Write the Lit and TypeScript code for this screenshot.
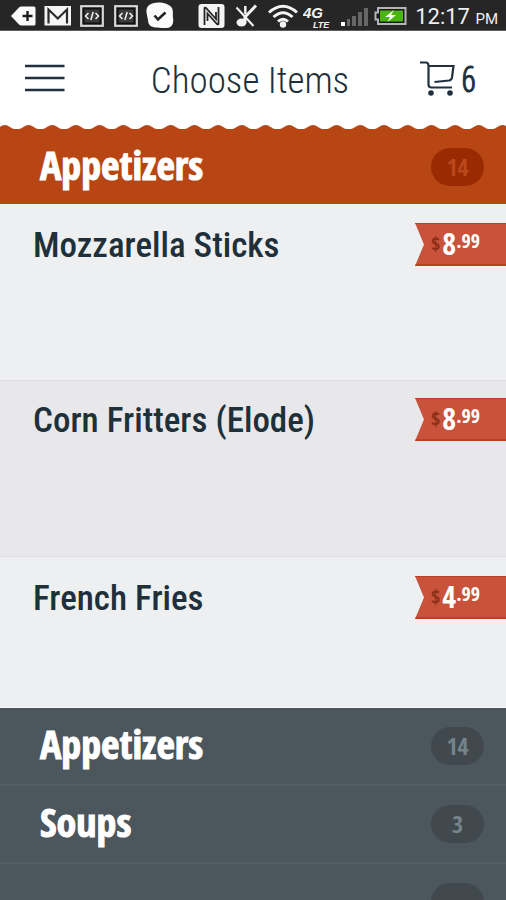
import { LitElement, html, css } from "lit";
import { customElement, property } from "lit/decorators.js";

interface Dish {
  name: string;
  dollars: string;
  cents: string;
  tone: string;
}

const dishes: Dish[] = [
  { name: "Mozzarella Sticks", dollars: "8", cents: ".99", tone: "first" },
  { name: "Corn Fritters (Elode)", dollars: "8", cents: ".99", tone: "alt" },
  { name: "French Fries", dollars: "4", cents: ".99", tone: "last" },
];

const codeIcon = (width: number) => html`
  <svg width=${width} height="30" viewBox="0 0 ${width} 30" aria-hidden="true">
    <rect x="1.2" y="6.2" width="21.6" height="19.6" fill="#111" stroke="#d8d8d8" stroke-width="2.2" />
    <rect x="4.5" y="9.5" width="15" height="13" fill="#3a3a3a" />
    <path d="M8.5 13 5.5 16l3 3M15.500 13l3 3-3 3M13.200 12l-2.400 8" fill="none" stroke="#f2f2f2" stroke-width="1.500" />
  </svg>`;

@customElement("status-bar")
export class StatusBar extends LitElement {
  static styles = css`
    :host {
      display: flex;
      align-items: center;
      justify-content: space-between;
      height: 30px;
      padding: 0 8px 0 10px;
      background: #262626;
      border-bottom: 1px solid #5c5c5c;
      box-sizing: content-box;
      color: #f0f0f0;
      font-family: Roboto, "Open Sans", sans-serif;
    }
    svg {
      display: block;
      flex: none;
    }
    .notices {
      display: flex;
      gap: 8px;
    }
    .system {
      display: flex;
      gap: 4px;
    }
    .clock {
      font-size: 22px;
      line-height: 34px;
      height: 30px;
      white-space: nowrap;
    }
    .half {
      font-size: 15px;
    }
    .net {
      font: italic bold 15px "Liberation Sans", sans-serif;
    }
    .lte {
      font: italic bold 9px "Liberation Sans", sans-serif;
    }
  `;

  render() {
    return html`
      <div class="notices">
        <svg width="26" height="30" viewBox="0 0 26 30" aria-hidden="true">
          <path d="M1 16 9 7.500Q10 6.500 11.500 6.500H24Q25.500 6.500 25.500 8V24Q25.500 25.500 24 25.500H11.500Q10 25.500 9 24.500Z" fill="#fafafa" />
          <path d="M17.500 11v10M12.500 16h10" stroke="#1d1d1d" stroke-width="2.400" />
        </svg>
        <svg width="28" height="30" viewBox="0 0 28 30" aria-hidden="true">
          <rect x=".5" y="6" width="26.500" height="19.500" fill="#f5f5f5" />
          <path d="M4.500 23.500V9.500L13.800 18.500 23 9.500V23.500" fill="none" stroke="#2b2b2b" stroke-width="2.200" />
        </svg>
        ${codeIcon(26)} ${codeIcon(24)}
        <svg width="29" height="30" viewBox="0 0 29 30" aria-hidden="true">
          <path d="M8 3C13 1.500 23 3 26 8 27.500 12 26.500 14 27 18 28 23 26 27.500 21 28 17 28 14 28 11 27.500 5 27.500 2 25 2 20 1.500 17 .8 15 .5 12 0 7 3 4 8 3Z" fill="#fafafa" />
          <path d="M8.500 15.500 12 19.500 19.500 12.500" fill="none" stroke="#222" stroke-width="2.600" />
        </svg>
      </div>
      <div class="system">
        <svg width="32" height="30" viewBox="0 0 32 30" aria-hidden="true">
          <rect x=".5" y="4" width="26" height="24" rx="3" fill="#f4f4f4" />
          <path d="M6.500 25V8.500Q6.500 7 8 8L18 19V12M20.500 7V23.500Q20.500 25 19 24L9.500 13.500V21" fill="none" stroke="#262626" stroke-width="1.800" />
        </svg>
        <svg width="29" height="30" viewBox="0 0 29 30" aria-hidden="true">
          <ellipse cx="7.500" cy="22.500" rx="5" ry="4" fill="#f4f4f4" />
          <path d="M11.300 14V6" fill="none" stroke="#f4f4f4" stroke-width="2.400" />
          <path d="M22 5.500 11 17V22" fill="none" stroke="#f4f4f4" stroke-width="3" />
          <path d="M2.500 7.500 19.500 26" stroke="#f4f4f4" stroke-width="2" />
        </svg>
        <svg width="32" height="30" viewBox="0 0 32 30" aria-hidden="true">
          <g fill="none" stroke="#f4f4f4" stroke-width="3">
            <path d="M2 12.500Q16 0 30 12.500" />
            <path d="M6.500 17Q16 8.500 25.500 17" />
            <path d="M11 21.500Q16 17 21 21.500" />
          </g>
          <circle cx="16" cy="24.500" r="3.200" fill="#f4f4f4" />
        </svg>
        <svg width="34" height="30" viewBox="0 0 34 30" aria-hidden="true">
          <text class="net" x="0" y="18" fill="#f4f4f4">4G</text>
          <text class="lte" x="10" y="28" fill="#f4f4f4">LTE</text>
        </svg>
        <svg width="29" height="30" viewBox="0 0 29 30" aria-hidden="true">
          <rect x="0" y="22" width="4" height="4" fill="#fff" />
          <g fill="#666">
            <rect x="6" y="19" width="3" height="7" />
            <rect x="11" y="16" width="4" height="10" />
            <rect x="17" y="12" width="4" height="14" />
            <rect x="23" y="8" width="4" height="18" />
          </g>
        </svg>
        <svg width="37" height="30" viewBox="0 0 37 30" aria-hidden="true">
          <path d="M4 8H31.500V24H4V19.500H1.500V12.500H4Z" fill="#1a1a1a" stroke="#b5b5b5" stroke-width="2" />
          <rect x="6" y="10.500" width="23" height="11" fill="#49b50e" />
          <path d="M20 10 11 17h5l-2.500 5L22 15h-5Z" fill="#fff" />
        </svg>
        <div class="clock">12:17 <span class="half">PM</span></div>
      </div>
    `;
  }
}

@customElement("section-row")
export class SectionRow extends LitElement {
  @property() label = "";
  @property() count = "";

  static styles = css`
    :host {
      display: block;
    }
    .row {
      display: flex;
      align-items: center;
      justify-content: space-between;
      width: 100%;
      height: 100%;
      margin: 0;
      padding: 0 22px 0 40px;
      border: 0;
      background: none;
      color: #fff;
      font: bold 40px "Open Sans Condensed", "Roboto Condensed", sans-serif;
      line-height: 48px;
      text-align: left;
    }
    .label {
      padding-bottom: 4px;
      -webkit-text-stroke: 1px #fff;
    }
    .count {
      display: grid;
      place-items: center;
      width: 53px;
      height: 38px;
      border-radius: 19px;
      background: var(--badge);
      color: var(--badge-text);
      font-size: 24px;
      line-height: 36px;
    }
  `;

  render() {
    return html`<button class="row" type="button">
      <span class="label">${this.label}</span><span class="count">${this.count}</span>
    </button>`;
  }
}

@customElement("app-root")
export class AppRoot extends LitElement {
  static styles = css`
    :host {
      display: flex;
      flex-direction: column;
      height: 100vh;
      overflow: hidden;
      background: #4c565d;
      color: #20303a;
      font-family: "Roboto Condensed", "Open Sans Condensed", sans-serif;
    }
    :host > * {
      flex: none;
    }
    header {
      display: grid;
      grid-template-columns: 80px 1fr 86px;
      align-items: center;
      height: 94px;
      padding: 0 24px;
      background: #fff;
    }
    .menu,
    .cart {
      display: flex;
      align-items: center;
      margin: 0;
      padding: 0;
      border: 0;
      background: none;
      color: inherit;
      font: inherit;
    }
    .cart {
      gap: 6px;
      justify-self: end;
      font-family: "Open Sans Condensed Light", "Roboto Condensed", sans-serif;
      font-size: 36px;
      padding-right: 6px;
      -webkit-text-stroke: 1px #20303a;
    }
    h1 {
      margin: 0;
      padding-top: 4px;
      font-size: 37px;
      font-weight: 300;
      text-align: center;
      white-space: nowrap;
    }
    .scallops {
      display: block;
      width: 100%;
      height: 4px;
      background: #fff;
    }
    .open {
      height: 75px;
      background: #b84614;
      --badge: #992a02;
      --badge-text: #b9491c;
    }
    ul {
      margin: 0;
      padding: 0;
      list-style: none;
    }
    .dish {
      display: flex;
      justify-content: space-between;
      align-items: flex-start;
      box-sizing: border-box;
      height: 177px;
      padding: 19px 0 0 33px;
      background: #eeeff1;
      font-size: 35px;
      font-weight: 500;
      line-height: 46px;
      border-bottom: 1px solid #dcddde;
    }
    .alt {
      height: 176px;
      padding-top: 17px;
      background: #e8e8ea;
    }
    .last {
      height: 151px;
      border-bottom-color: #fafafa;
    }
    .price {
      display: flex;
      align-items: center;
      box-sizing: border-box;
      width: 91px;
      height: 43px;
      padding-left: 16px;
      background: #c9523a;
      border: solid #b94122;
      border-width: 1px 0 2px;
      clip-path: polygon(0 0, 100% 0, 100% 100%, 0 100%, 9px 50%);
      color: #fff;
      font-family: "Open Sans Condensed", "Roboto Condensed", sans-serif;
      font-weight: bold;
      font-size: 30px;
    }
    .sign {
      color: #8e2f16;
      font-size: 20px;
      margin-right: 2px;
    }
    .cents {
      align-self: flex-start;
      font-size: 20px;
      line-height: 34px;
    }
    .closed {
      box-sizing: border-box;
      height: 78px;
      border-bottom: 2px solid #535e66;
      --badge: #41494e;
      --badge-text: #75838d;
    }
  `;

  render() {
    return html`
      <status-bar></status-bar>
      <header>
        <button class="menu" type="button" aria-label="Menu">
          <svg width="41" height="30" viewBox="0 0 41 30">
            <path d="M1 3H40.500M1 15H40.500M1 27H40.500" stroke="#20303f" stroke-width="2.600" />
          </svg>
        </button>
        <h1>Choose Items</h1>
        <button class="cart" type="button" aria-label="Cart, 6 items">
          <svg width="36" height="36" viewBox="0 0 36 36" fill="none" stroke="#20303f" stroke-width="2.200">
            <path d="M0 2.500H6Q8.500 2.500 8.500 6V24.500Q8.500 27.500 11.500 27.500H32" />
            <path d="M8.500 6H33.500L32 17.500Q31.500 20 29 20.500L14.500 22" />
            <circle cx="11" cy="33" r="2.800" fill="#20303f" stroke="none" />
            <circle cx="30" cy="33" r="2.800" fill="#20303f" stroke="none" />
          </svg>
          <span>6</span>
        </button>
      </header>
      <svg class="scallops" aria-hidden="true">
        <defs>
          <pattern id="wave" x="-7" y="0" width="23.700" height="4" patternUnits="userSpaceOnUse">
            <path d="M0 4H2C6 3.500 8 0 11.850 0S17.700 3.500 21.700 4H23.700Z" fill="#b84614" />
          </pattern>
        </defs>
        <rect width="100%" height="4" fill="url(#wave)" />
      </svg>
      <section-row class="open" label="Appetizers" count="14"></section-row>
      <ul>
        ${dishes.map(
          (d) => html`<li class="dish ${d.tone}">
            <span>${d.name}</span>
            <span class="price"><span class="sign">$</span>${d.dollars}<span class="cents">${d.cents}</span></span>
          </li>`
        )}
      </ul>
      <section-row class="closed" label="Appetizers" count="14"></section-row>
      <section-row class="closed" label="Soups" count="3"></section-row>
      <section-row class="closed"></section-row>
    `;
  }
}
